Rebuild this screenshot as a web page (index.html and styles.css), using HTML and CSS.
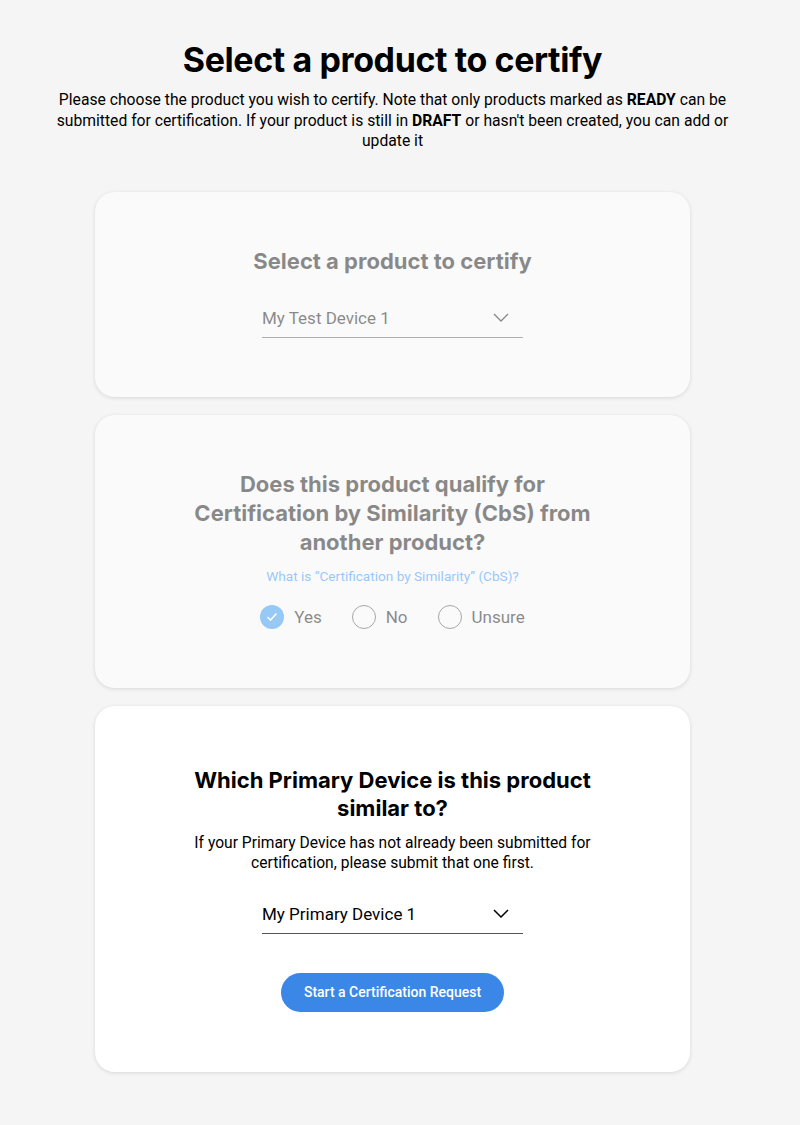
FILE: index.html
```html
<!DOCTYPE html>
<html lang="en">
<head>
    <meta charset="UTF-8">
    <meta name="viewport" content="width=device-width, initial-scale=1.0">
    <title>Select a product to certify</title>
    <link rel="stylesheet" href="styles.css">
</head>
<body>
    <!-- header -->
    <header class="intro">
        <h1>Select a product to certify</h1>
        <p>Please choose the product you wish to certify. Note that only products marked as <b>READY</b> can be submitted for certification. If your product is still in <b>DRAFT</b> or hasn't been created, you can add or update it</p>
    </header>

    <main class="steps">
        <!-- step 1 -->
        <section class="card done">
            <h2>Select a product to certify</h2>
            <div class="dropdown">
                <span>My Test Device 1</span>
                <svg width="16" height="9" viewBox="0 0 16 9"><path d="M1 1l7 7 7-7" fill="none" stroke="currentColor" stroke-width="1.3"/></svg>
            </div>
        </section>

        <!-- step 2 -->
        <section class="card done">
            <h2>Does this product qualify for<br>Certification by Similarity (CbS) from<br>another product?</h2>
            <a class="help-link" href="#">What is “Certification by Similarity” (CbS)?</a>
            <div class="radios">
                <label class="radio checked">
                    <span class="dot">
                        <svg width="12" height="10" viewBox="0 0 12 10"><path d="M1.5 5l3 3 6-6.5" fill="none" stroke="#fff" stroke-width="1.6"/></svg>
                    </span>
                    Yes
                </label>
                <label class="radio"><span class="dot"></span>No</label>
                <label class="radio"><span class="dot"></span>Unsure</label>
            </div>
        </section>

        <!-- step 3 -->
        <section class="card current">
            <h2>Which Primary Device is this product<br>similar to?</h2>
            <p class="note">If your Primary Device has not already been submitted for<br>certification, please submit that one first.</p>
            <div class="dropdown">
                <span>My Primary Device 1</span>
                <svg width="16" height="9" viewBox="0 0 16 9"><path d="M1 1l7 7 7-7" fill="none" stroke="currentColor" stroke-width="1.5"/></svg>
            </div>
            <button type="button" class="primary">Start a Certification Request</button>
        </section>
    </main>
</body>
</html>
```

FILE: styles.css
```css
/* general */
body {
    margin: 0;
    padding-right: 15px;
    background-color: #f5f5f5;
    color: #000;
    font-family: Roboto, "Liberation Sans", sans-serif;
}

/* header */
.intro {
    text-align: center;
    padding: 38px 40px 0;
}
.intro h1 {
    margin: 0;
    font-family: Inter, "Liberation Sans", sans-serif;
    font-size: 34px;
    line-height: 44px;
    font-weight: 700;
    letter-spacing: -0.4px;
}
.intro p {
    margin: 8px auto 0;
    font-size: 15.7px;
    line-height: 20.5px;
    max-width: 690px;
}

/* cards */
.steps {
    display: flex;
    flex-direction: column;
    gap: 18px;
    width: 595px;
    margin: 40px auto 0;
    padding-bottom: 50px;
}
.card {
    display: flex;
    flex-direction: column;
    align-items: center;
    text-align: center;
    border-radius: 20px;
    background-color: #fff;
    box-shadow: 0 1px 4px rgba(0, 0, 0, 0.12);
    padding: 60px 20px 60px;
}
.card h2 {
    margin: 0;
    font-family: Inter, "Liberation Sans", sans-serif;
    font-size: 22px;
    line-height: 28px;
    font-weight: 700;
    letter-spacing: 0;
}
.card.done {
    background-color: #fafafa;
    padding-top: 55px;
    padding-bottom: 59px;
}
.card.done > * {
    opacity: 0.45;
}
.card.done h2 {
    line-height: 29px;
}

/* dropdown */
.dropdown {
    display: flex;
    align-items: center;
    justify-content: space-between;
    box-sizing: border-box;
    width: 261px;
    height: 39px;
    padding: 0 14px 0 0;
    border-bottom: 1.5px solid #555;
    font-size: 17px;
    margin-top: 22px;
}
.card.done .dropdown {
    margin-top: 23px;
}

/* radios */
.help-link {
    margin-top: 11px;
    font-size: 13.6px;
    line-height: 16px;
    color: #1a8cff;
    text-decoration: none;
}
.radios {
    display: flex;
    gap: 30px;
    margin-top: 21px;
    font-size: 17px;
}
.radio {
    display: flex;
    align-items: center;
    gap: 10px;
}
.radio .dot {
    display: flex;
    align-items: center;
    justify-content: center;
    box-sizing: border-box;
    width: 24px;
    height: 24px;
    border-radius: 50%;
    border: 1.5px solid #444;
}
.radio.checked .dot {
    border: none;
    background-color: #1f8ef1;
}

/* step 3 */
.note {
    margin: 11px 0 0;
    font-size: 15.6px;
    line-height: 20px;
}
button.primary {
    margin-top: 39px;
    width: 223px;
    height: 39px;
    border: none;
    border-radius: 20px;
    background-color: #3b87e8;
    color: #fff;
    font-family: Roboto, "Liberation Sans", sans-serif;
    font-size: 14px;
    font-weight: 500;
    cursor: pointer;
}
```
